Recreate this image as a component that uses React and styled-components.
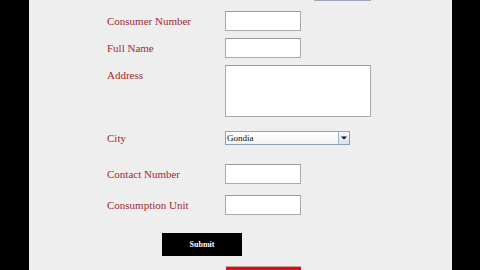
import React from 'react'
import styled, { createGlobalStyle } from 'styled-components'

const Global = createGlobalStyle`
html, body {
margin: 0;
padding: 0;
background: #000;
}
`

const Screen = styled.div`
display: flex;
width: 480px;
height: 270px;
overflow: hidden;
background: #000;
`

const Bar = styled.div`
width: ${p => p.w}px;
flex-shrink: 0;
background: #000;
`

const Panel = styled.div`
flex: 1;
background: #eeeeee;
display: flex;
flex-direction: column;
font-family: "Liberation Serif", "Times New Roman", serif;
`

const TopStub = styled.div`
margin-left: 285px;
width: 57px;
height: 1px;
background: #e2e4e6;
border-bottom: 1px solid #9fabb7;
`

const Row = styled.div`
display: grid;
grid-template-columns: 118px auto;
align-items: ${p => p.top ? 'start' : 'center'};
margin-top: ${p => p.mt}px;
padding-left: 78px;
`

const Label = styled.label`
color: #9e2a30;
font-size: 11px;
line-height: 14px;
padding-top: ${p => p.pt || 0}px;
`

const Field = styled.input`
box-sizing: border-box;
width: ${p => p.w || 76}px;
height: 20px;
margin: 0;
padding: 0 2px;
border: 1px solid #a9a9a9;
border-top-color: #9a9a9a;
background: #fff;
outline: none;
`

const Area = styled.textarea`
box-sizing: border-box;
width: 146px;
height: 52px;
margin: 0;
padding: 2px;
border: 1px solid #a9a9a9;
border-top-color: #9a9a9a;
background: #fff;
resize: none;
outline: none;
`

const Select = styled.div`
box-sizing: border-box;
width: 125px;
height: 14px;
display: flex;
border: 1px solid #8aa2b8;
background: linear-gradient(#ffffff, #f1f3f5);
`

const SelectText = styled.span`
flex: 1;
font-size: 9px;
line-height: 12px;
padding-left: 1px;
color: #111;
`

const Arrow = styled.span`
width: 10px;
display: flex;
align-items: center;
justify-content: center;
border-left: 1px solid #9fb3c6;
background: linear-gradient(#f4f7fa, #dbe4ec);
`

const SubmitButton = styled.button`
margin-left: 55px;
width: 80px;
height: 23px;
background: #000;
color: #fff;
border: none;
font-family: "Liberation Serif", "Times New Roman", serif;
font-weight: bold;
font-size: 8px;
cursor: pointer;
`

const RedBar = styled.div`
margin-top: 10px;
margin-left: 197px;
width: 75px;
height: 6px;
background: #d9101a;
border-top: 1px solid #c9a0a0;
`

export default function App() {
  return (
    <>
      <Global />
      <Screen>
        <Bar w={29} />
        <Panel>
          <TopStub />
          <Row mt={10}>
            <Label>Consumer Number</Label>
            <Field />
          </Row>
          <Row mt={7}>
            <Label>Full Name</Label>
            <Field />
          </Row>
          <Row mt={7} top>
            <Label pt={3}>Address</Label>
            <Area />
          </Row>
          <Row mt={14}>
            <Label>City</Label>
            <Select>
              <SelectText>Gondia</SelectText>
              <Arrow>
                <svg width="6" height="4" viewBox="0 0 6 4">
                  <path d="M0 0.5 L6 0.5 L3 3.5 Z" fill="#111" />
                </svg>
              </Arrow>
            </Select>
          </Row>
          <Row mt={19}>
            <Label>Contact Number</Label>
            <Field />
          </Row>
          <Row mt={11}>
            <Label>Consumption Unit</Label>
            <Field />
          </Row>
          <Row mt={18}>
            <SubmitButton>Submit</SubmitButton>
          </Row>
          <RedBar />
        </Panel>
        <Bar w={28} />
      </Screen>
    </>
  )
}
